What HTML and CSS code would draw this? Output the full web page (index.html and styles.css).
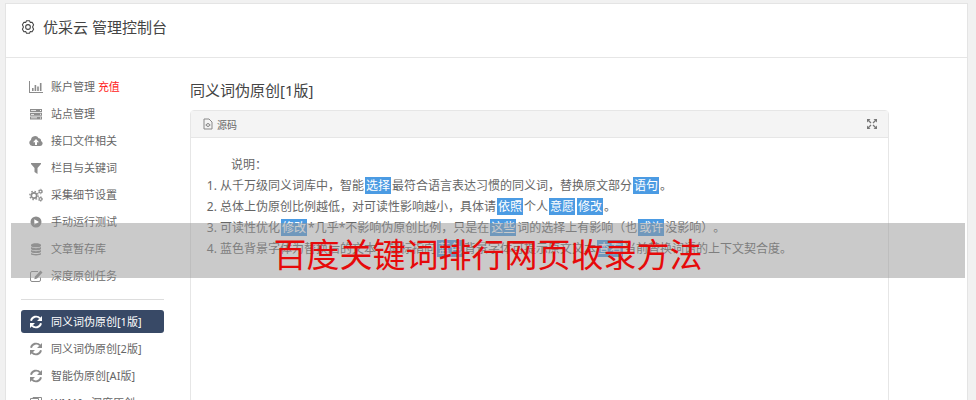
FILE: index.html
```html
<!DOCTYPE html>
<html lang="zh-CN">
<head>
    <meta charset="UTF-8">
    <meta name="viewport" content="width=device-width, initial-scale=1.0">
    <title>优采云 管理控制台</title>
    <link rel="stylesheet" href="styles.css">
</head>
<body>
    <!-- Shared icon shapes -->
    <svg class="symbols" aria-hidden="true">
        <symbol id="icon-refresh" viewBox="0 0 14 14">
            <path d="M2 5.7A5.2 5.2 0 0 1 11 3.4M12 8.3A5.2 5.2 0 0 1 3 10.6" fill="none" stroke="currentColor" stroke-width="1.9"/>
            <path d="M13 1v5H8zM1 13V8h5z"/>
        </symbol>
    </svg>
    <div class="container">
        <header class="header">
            <svg class="header-icon" viewBox="0 0 16 16" aria-hidden="true">
                <path d="M6.3 .8h3.400l.8 1.900 2.200-.1 1.700 2.900L13.200 8l1.200 2.500-1.700 2.900-2.200-.1-.8 1.900H6.300l-.8-1.900-2.200.1-1.700-2.900L2.800 8 1.600 5.500l1.700-2.900 2.200.1z" fill="none" stroke="currentColor" stroke-linejoin="round" stroke-width="1.200"/>
                <circle cx="8" cy="8" r="2.700" fill="none" stroke="currentColor" stroke-width="1.200"/>
            </svg>
            <h1>优采云 管理控制台</h1>
        </header>
        <div class="main">
            <nav class="sidebar">
                <a href="#">
                    <svg viewBox="0 0 14 14"><path d="M0 1h1v11h13v1H0zM3 8h1.600v3H3zM5.600 5h1.600v6H5.600zM8.200 6.500h1.600V11H8.200zM10.900 3h1.600v8h-1.600z"/></svg>
                    <span>账户管理 <b class="recharge">充值</b></span>
                </a>
                <a href="#">
                    <svg viewBox="0 0 14 14"><path fill-rule="evenodd" d="M1 2h12v3H1zM1 5.700h12v3H1zM1 9.400h12v3H1zM2 3.200v.8h5v-.8zM2 6.900v.8h3v-.8zM2 10.500v.8h6v-.8zM11 3v1h1V3zM11 6.700v1h1v-1zM11 10.400v1h1v-1z"/></svg>
                    <span>站点管理</span>
                </a>
                <a href="#">
                    <svg viewBox="0 0 14 14"><path fill-rule="evenodd" d="M3.300 12A3.200 3.200 0 0 1 2 6 4 4 0 0 1 9.600 4.300 2.200 2.200 0 0 1 12 7a2.600 2.600 0 0 1-1 5zM7 5L4 8.200h2V11h2V8.200h2z"/></svg>
                    <span>接口文件相关</span>
                </a>
                <a href="#">
                    <svg viewBox="0 0 14 14"><path d="M2 2h10v1L8.500 7v6l-3-2V7L2 3z"/></svg>
                    <span>栏目与关键词</span>
                </a>
                <a href="#">
                    <svg viewBox="0 0 14 14">
                        <g fill="none" stroke="currentColor">
                            <circle cx="5" cy="7.500" r="2.700" stroke-width="1.700"/>
                            <circle cx="5" cy="7.500" r="4.200" stroke-width="1.300" stroke-dasharray="1.500 1.800"/>
                            <circle cx="11.500" cy="3.500" r="1.400" stroke-width="1.100"/>
                            <circle cx="11.500" cy="3.500" r="2.300" stroke-width=".8" stroke-dasharray="1.200 1.200"/>
                            <circle cx="11.500" cy="11" r="1.400" stroke-width="1.100"/>
                            <circle cx="11.500" cy="11" r="2.300" stroke-width=".8" stroke-dasharray="1.200 1.200"/>
                        </g>
                    </svg>
                    <span>采集细节设置</span>
                </a>
                <a href="#">
                    <svg viewBox="0 0 14 14"><path fill-rule="evenodd" d="M7 1.500a5.500 5.500 0 1 0 0 11 5.500 5.500 0 0 0 0-11zM5.300 4.200L10 7l-4.700 2.800z"/></svg>
                    <span>手动运行测试</span>
                </a>
                <a href="#">
                    <svg viewBox="0 0 14 14"><path d="M2 3c0-2.400 10-2.400 10 0v.8c0 2-10 2-10 0zM2 5.100c2 1.500 8 1.500 10 0v1.600c0 2-10 2-10 0zM2 8c2 1.500 8 1.500 10 0v1.600c0 2-10 2-10 0zM2 10.900c2 1.500 8 1.500 10 0v1c0 2-10 2-10 0z"/></svg>
                    <span>文章暂存库</span>
                </a>
                <a href="#">
                    <svg viewBox="0 0 14 14">
                        <path d="M9 2.500H3Q1.500 2.500 1.500 4v7q0 1.500 1.500 1.500h7q1.500 0 1.500-1.500V8.500" fill="none" stroke="currentColor"/>
                        <path d="M11.500 1.500l2 2L8 9.500l-2.700.7.700-2.700z"/>
                    </svg>
                    <span>深度原创任务</span>
                </a>
                <hr>
                <a href="#" class="active">
                    <svg><use href="#icon-refresh"/></svg>
                    <span>同义词伪原创[1版]</span>
                </a>
                <a href="#">
                    <svg><use href="#icon-refresh"/></svg>
                    <span>同义词伪原创[2版]</span>
                </a>
                <a href="#">
                    <svg><use href="#icon-refresh"/></svg>
                    <span>智能伪原创[AI版]</span>
                </a>
                <a href="#">
                    <svg viewBox="0 0 14 14"><path d="M1.500 2.500h8v10h-8zM4 2.500v-1h8.500v10" fill="none" stroke="currentColor"/></svg>
                    <span>WMAI+ 深度原创</span>
                </a>
            </nav>
            <main class="content">
                <h2>同义词伪原创[1版]</h2>
                <section class="panel">
                    <div class="panel-heading">
                        <svg class="file-icon" viewBox="0 0 10 12" aria-hidden="true">
                            <path d="M1 1h5l3 3v7H1z" fill="none" stroke="currentColor"/>
                            <circle cx="5" cy="7" r="1.500" fill="none" stroke="currentColor"/>
                            <path d="M2.500 6.500h1v1h-1zM6.500 6.500h1v1h-1z"/>
                        </svg>
                        <h3>源码</h3>
                        <button type="button" class="expand" aria-label="全屏">
                            <svg viewBox="0 0 12 12">
                                <path d="M1 1h3.500L1 4.500zM11 1v3.500L7.500 1zM1 11V7.500L4.500 11zM11 11H7.500L11 7.500z"/>
                                <path d="M2 2l3 3M10 2L7 5M2 10l3-3M10 10L7 7" stroke="currentColor" stroke-width="1.300"/>
                            </svg>
                        </button>
                    </div>
                    <div class="panel-body">
                        <p>说明：</p>
                        <ol>
                            <li>从千万级同义词库中，智能<mark>选择</mark>最符合语言表达习惯的同义词，替换原文部分<mark>语句</mark>。</li>
                            <li>总体上伪原创比例越低，对可读性影响越小，具体请<mark>依照</mark>个人<mark>意愿</mark><mark>修改</mark>。</li>
                            <li>可读性优化<mark>修改</mark>*几乎*不影响伪原创比例，只是在<mark>这些</mark>词的选择上有影响（也<mark>或许</mark>没影响）。</li>
                            <li>蓝色背景字体为替换后的文本，鼠标指向<mark>蓝色</mark>背景字体可提示原文文本<mark>查看</mark>当前替换词语的上下文契合度。</li>
                        </ol>
                    </div>
                </section>
            </main>
        </div>
    </div>
    <div class="banner">百度关键词排行网页收录方法</div>
</body>
</html>
```

FILE: styles.css
```css
* {
    box-sizing: border-box;
}
html {
    overflow: hidden;
}
body {
    margin: 0;
    padding: 3px 8px 0 5px;
    background-color: #f1f1f1;
    color: #666;
    font-family: "Noto Sans", "Noto Sans CJK SC", sans-serif;
    font-size: 12px;
    text-spacing-trim: space-all;
}
h1, h2, h3, p, ol {
    margin: 0;
    font-weight: normal;
}
svg {
    fill: currentColor;
}
.symbols {
    position: absolute;
    width: 0;
    height: 0;
}
.container {
    background-color: #fff;
    border: 1px solid #e4e4e4;
    min-height: 100vh;
}
.header {
    display: flex;
    align-items: center;
    gap: 8px;
    height: 54px;
    padding: 0 15px 7px;
    border-bottom: 1px solid #e6e6e6;
    color: #444;
}
.header-icon {
    width: 14px;
    height: 14px;
}
.header h1 {
    font-size: 15px;
    line-height: 24px;
}
.main {
    display: flex;
    gap: 26px;
    padding: 17px 78px 0 15px;
}
/* Left menu */
.sidebar {
    display: flex;
    flex-direction: column;
    flex: 0 0 143px;
    gap: 4px;
}
.sidebar a {
    display: flex;
    align-items: center;
    gap: 8px;
    height: 23px;
    padding-left: 8px;
    border-radius: 3px;
    color: #666;
    font-size: 11px;
    line-height: 23px;
    text-decoration: none;
    white-space: nowrap;
}
.sidebar svg {
    width: 14px;
    height: 14px;
    color: #8c8c8c;
}
.sidebar .active {
    background-color: #384966;
    color: #fff;
}
.sidebar .active svg {
    color: #fff;
}
.sidebar hr {
    width: 100%;
    margin: 8px 0 6px;
    border: 0;
    border-top: 1px solid #ddd;
}
.recharge {
    color: #f22;
    font-weight: normal;
}
/* Right side */
.content {
    display: flex;
    flex-direction: column;
    flex: 1;
    min-width: 0;
}
.content h2 {
    margin: 3px 0 8px;
    color: #444;
    font-size: 15px;
    line-height: 24px;
}
.panel {
    flex: 1;
    border: 1px solid #e6e6e6;
    border-radius: 4px 4px 0 0;
}
.panel-heading {
    display: flex;
    align-items: center;
    gap: 4px;
    height: 27px;
    padding: 0 10px 0 12px;
    background-color: #f4f4f4;
    border-bottom: 1px solid #e6e6e6;
}
.panel-heading h3 {
    flex: 1;
    font-size: 10px;
}
.file-icon {
    width: 10px;
    height: 12px;
    color: #888;
}
.expand {
    display: flex;
    padding: 0;
    border: 0;
    background: none;
    color: #777;
    cursor: pointer;
}
.expand svg {
    width: 12px;
    height: 12px;
}
.panel-body {
    padding: 16px 15px;
    line-height: 21px;
}
.panel-body p {
    padding-left: 25px;
}
.panel-body ol {
    padding-left: 14px;
}
.panel-body mark {
    margin: 0 1px;
    padding: 0 1px;
    background-color: #4b9be3;
    color: #fff;
}
/* Caption strip over the page */
.banner {
    position: absolute;
    top: 223px;
    left: 11px;
    right: 11px;
    height: 55px;
    background-color: rgba(150, 150, 150, 0.5);
    color: #e60a0a;
    font-size: 33px;
    line-height: 63px;
    text-align: center;
    white-space: nowrap;
}
```
